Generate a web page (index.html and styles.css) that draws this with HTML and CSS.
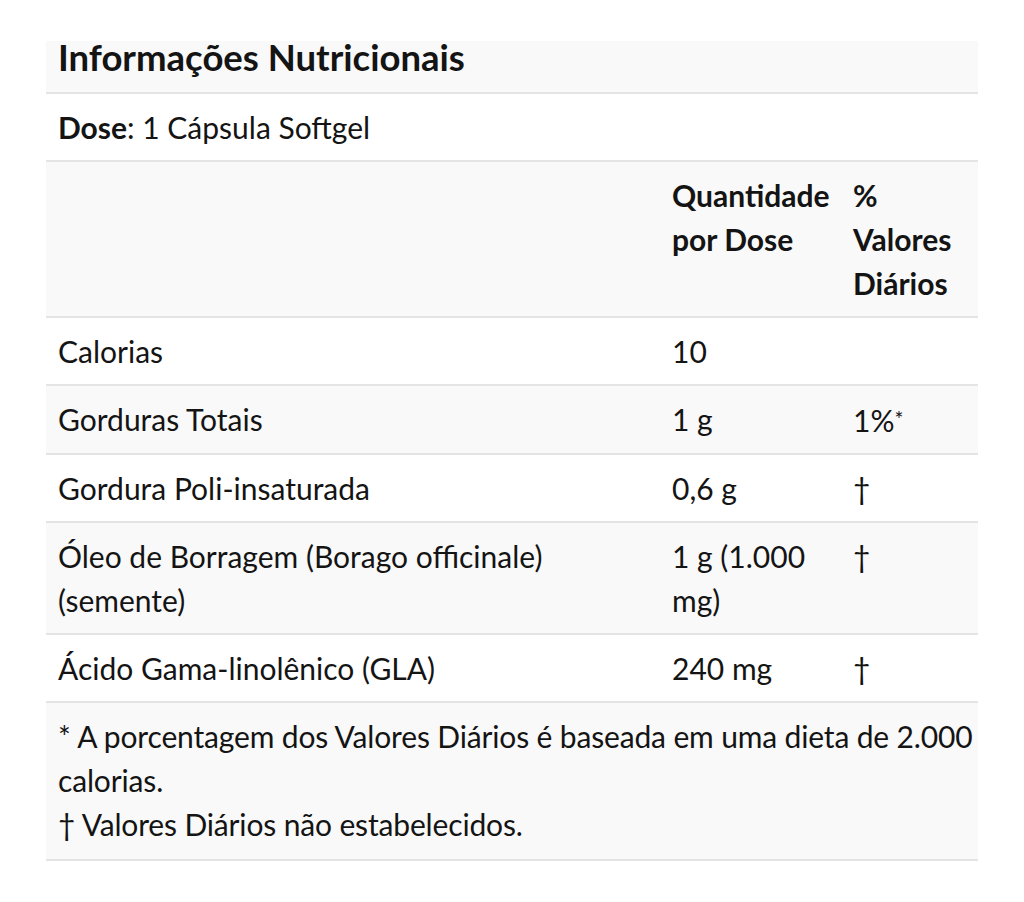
FILE: index.html
```html
<!DOCTYPE html>
<html lang="pt">
<head>
<meta charset="utf-8">
<title>Informações Nutricionais</title>
<link rel="stylesheet" href="styles.css">
</head>
<body>
<div class="page">
  <table class="facts">
    <colgroup>
      <col class="c1"><col class="c2"><col class="c3">
    </colgroup>
    <tbody>
      <tr class="title-row"><th colspan="3" class="title">Informações Nutricionais</th></tr>
      <tr><td colspan="3"><strong>Dose</strong>: 1 Cápsula Softgel</td></tr>
      <tr class="alt head"><td></td><th>Quantidade por Dose</th><th>% Valores Diários</th></tr>
      <tr><td>Calorias</td><td>10</td><td></td></tr>
      <tr class="alt"><td>Gorduras Totais</td><td>1 g</td><td>1%<span class="ast">*</span></td></tr>
      <tr><td>Gordura Poli-insaturada</td><td>0,6 g</td><td>†</td></tr>
      <tr class="alt"><td>Óleo de Borragem (Borago officinale) (semente)</td><td>1 g (1.000 mg)</td><td>†</td></tr>
      <tr><td>Ácido Gama-linolênico (GLA)</td><td>240 mg</td><td>†</td></tr>
      <tr class="alt"><td colspan="3" class="notes">* A porcentagem dos Valores Diários é baseada em uma dieta de 2.000 calorias.<br>† Valores Diários não estabelecidos.</td></tr>
    </tbody>
  </table>
</div>
</body>
</html>
```

FILE: styles.css
```css
html, body {
  margin: 0;
  padding: 0;
  background: #ffffff;
}

.page {
  padding: 41px 46px 0 46px;
  font-family: Lato, "Open Sans", sans-serif;
  color: #141414;
}

.facts {
  width: 932px;
  border-collapse: collapse;
  table-layout: fixed;
  font-size: 30px;
  line-height: 44px;
}

.c1 { width: 614px; }
.c2 { width: 181px; }
.c3 { width: 137px; }

.facts td,
.facts th {
  padding: 11px 12px;
  text-align: left;
  vertical-align: top;
  border-bottom: 2px solid #e4e4e4;
}

.facts th {
  font-weight: 700;
}

.facts strong {
  font-weight: 700;
}

.facts tr.alt td,
.facts tr.alt th,
.facts tr.title-row th {
  background: #f9f9f9;
}

.facts th.title {
  font-size: 36.5px;
  line-height: 32px;
  padding: 0 12px 19px 12px;
}

.facts td.notes {
  padding-right: 2px;
  padding-bottom: 13px;
  letter-spacing: -0.15px;
}

.ast {
  font-size: 21px;
  vertical-align: 5px;
}
```
